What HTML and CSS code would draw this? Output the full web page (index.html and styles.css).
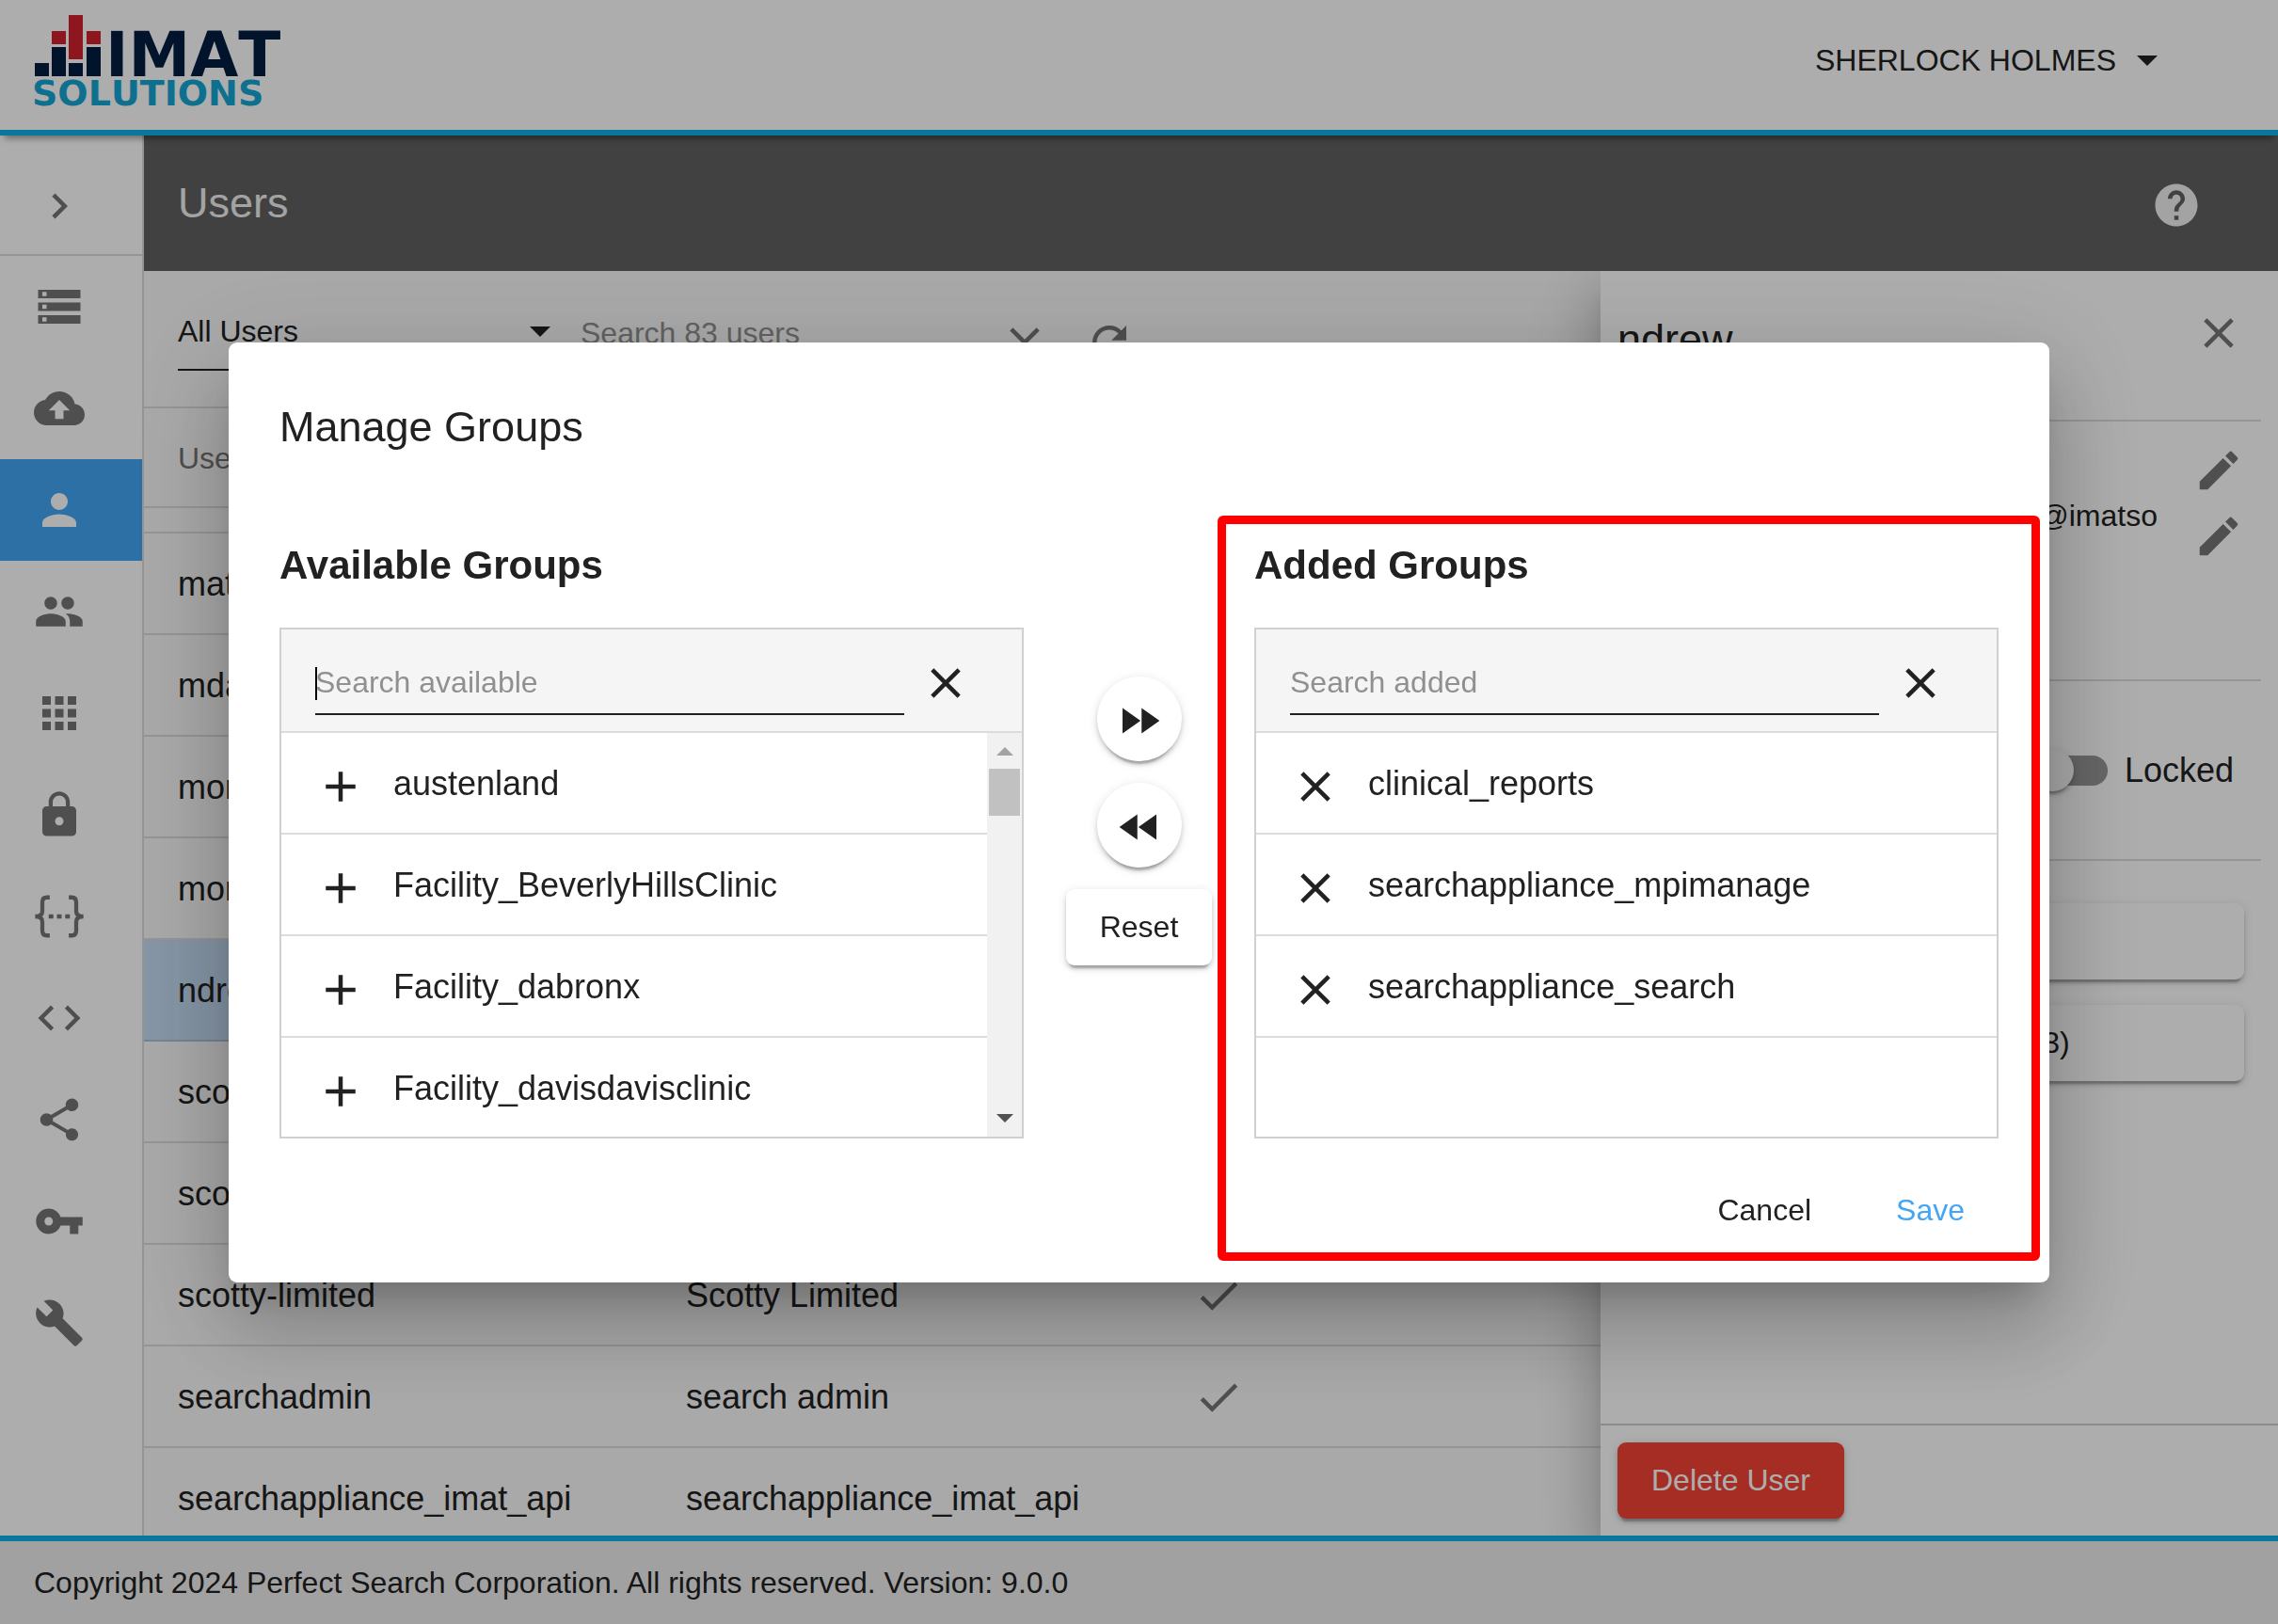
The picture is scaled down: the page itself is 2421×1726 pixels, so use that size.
FILE: index.html
```html
<!DOCTYPE html>
<html lang="en">
<head>
<meta charset="utf-8">
<title>Users</title>
<link rel="stylesheet" href="styles.css">
</head>
<body>
<svg class="sprite" aria-hidden="true">
  <symbol id="close" viewBox="0 0 24 24"><path d="M19 6.41 17.59 5 12 10.59 6.41 5 5 6.41 10.59 12 5 17.59 6.41 19 12 13.41 17.59 19 19 17.59 13.41 12z"/></symbol>
  <symbol id="plus" viewBox="0 0 24 24"><path d="M19 13h-6v6h-2v-6H5v-2h6V5h2v6h6v2z"/></symbol>
  <symbol id="check" viewBox="0 0 24 24"><path d="M9 16.17 4.83 12l-1.42 1.41L9 19 21 7l-1.41-1.41z"/></symbol>
  <symbol id="edit" viewBox="0 0 24 24"><path d="M3 17.25V21h3.75L17.81 9.94l-3.75-3.75L3 17.25zM20.71 7.04a1 1 0 0 0 0-1.41l-2.34-2.34a1 1 0 0 0-1.41 0l-1.83 1.83 3.75 3.75 1.83-1.83z"/></symbol>
</svg>

<header class="header">
  <svg class="logo" viewBox="0 0 280 108" role="img" aria-label="IMAT Solutions">
    <g fill="#041d41">
      <path d="M1 52h15v14H1zM19 35h15v31H19zM37 52h15v14H37zM56 35h15v31H56z"/>
      <text class="logo-name" x="76" y="66">IMAT</text>
    </g>
    <path fill="#d2232f" d="M19 18h15v14H19zM37 1h15v47H37zM56 18h15v14H56z"/>
    <text class="logo-sub" x="-2" y="97" fill="#13a5d2">SOLUTIONS</text>
  </svg>
  <button class="account" type="button">SHERLOCK HOLMES <span class="arrow"></span></button>
</header>

<div class="main">
  <nav class="nav">
    <button class="nav-toggle" type="button" aria-label="Expand menu"><svg class="icon" viewBox="0 0 24 24"><path d="M10 6 8.59 7.41 13.17 12l-4.58 4.59L10 18l6-6z"/></svg></button>
    <a href="#" class="nav-item" aria-label="Storage"><svg class="icon" viewBox="0 0 24 24"><path d="M2 20h20v-4H2v4zm2-3h2v2H4v-2zM2 4v4h20V4H2zm4 3H4V5h2v2zm-4 7h20v-4H2v4zm2-3h2v2H4v-2z"/></svg></a>
    <a href="#" class="nav-item" aria-label="Upload"><svg class="icon" viewBox="0 0 24 24"><path d="M19.35 10.04A7.49 7.49 0 0 0 12 4C9.11 4 6.6 5.64 5.35 8.04A5.994 5.994 0 0 0 0 14c0 3.31 2.69 6 6 6h13c2.76 0 5-2.24 5-5 0-2.64-2.05-4.78-4.65-4.96zM14 13v4h-4v-4H7l5-5 5 5h-3z"/></svg></a>
    <a href="#" class="nav-item active" aria-label="Users"><svg class="icon" viewBox="0 0 24 24"><path d="M12 12c2.21 0 4-1.79 4-4s-1.79-4-4-4-4 1.79-4 4 1.79 4 4 4zm0 2c-2.67 0-8 1.34-8 4v2h16v-2c0-2.66-5.33-4-8-4z"/></svg></a>
    <a href="#" class="nav-item" aria-label="Groups"><svg class="icon" viewBox="0 0 24 24"><path d="M16 11c1.66 0 2.99-1.34 2.99-3S17.66 5 16 5s-3 1.34-3 3 1.34 3 3 3zm-8 0c1.66 0 2.99-1.34 2.99-3S9.66 5 8 5 5 6.34 5 8s1.34 3 3 3zm0 2c-2.33 0-7 1.17-7 3.5V19h14v-2.5c0-2.33-4.67-3.5-7-3.5zm8 0c-.29 0-.62.02-.97.05 1.16.84 1.97 1.97 1.97 3.45V19h6v-2.5c0-2.33-4.67-3.5-7-3.5z"/></svg></a>
    <a href="#" class="nav-item" aria-label="Apps"><svg class="icon" viewBox="0 0 24 24"><path d="M4 8h4V4H4v4zm6 12h4v-4h-4v4zm-6 0h4v-4H4v4zm0-6h4v-4H4v4zm6 0h4v-4h-4v4zm6-10v4h4V4h-4zm-6 4h4V4h-4v4zm6 6h4v-4h-4v4zm0 6h4v-4h-4v4z"/></svg></a>
    <a href="#" class="nav-item" aria-label="Security"><svg class="icon" viewBox="0 0 24 24"><path d="M18 8h-1V6c0-2.76-2.24-5-5-5S7 3.24 7 6v2H6c-1.1 0-2 .9-2 2v10c0 1.1.9 2 2 2h12c1.1 0 2-.9 2-2V10c0-1.100-.9-2-2-2zm-6 9c-1.1 0-2-.9-2-2s.9-2 2-2 2 .9 2 2-.9 2-2 2zm3.100-9H8.900V6a3.100 3.100 0 0 1 6.200 0v2z"/></svg></a>
    <a href="#" class="nav-item" aria-label="Variables"><svg class="icon" viewBox="0 0 24 24"><path fill="none" stroke="currentColor" stroke-width="1.900" d="M7.500 3H6.200Q4 3 4 5.200V9.500Q4 12 .6 12 4 12 4 14.500v4.300Q4 21 6.200 21h1.300M16.500 3h1.300Q20 3 20 5.200v4.300q0 2.500 3.400 2.500-3.400 0-3.400 2.500v4.300Q20 21 17.800 21h-1.300"/><path d="M7 11h2.200v2H7zM10.900 11h2.200v2h-2.200zM14.800 11H17v2h-2.200z"/></svg></a>
    <a href="#" class="nav-item" aria-label="Code"><svg class="icon" viewBox="0 0 24 24"><path d="M9.400 16.600 4.800 12l4.600-4.600L8 6l-6 6 6 6 1.400-1.400zm5.200 0 4.600-4.600-4.600-4.600L16 6l6 6-6 6-1.400-1.400z"/></svg></a>
    <a href="#" class="nav-item" aria-label="Share"><svg class="icon" viewBox="0 0 24 24"><path d="M18 16.080c-.76 0-1.440.3-1.960.77L8.910 12.700c.05-.23.09-.46.09-.7s-.04-.47-.09-.7l7.050-4.110c.54.5 1.250.81 2.040.81 1.660 0 3-1.340 3-3s-1.340-3-3-3-3 1.340-3 3c0 .24.040.47.090.7L8.040 9.810C7.500 9.310 6.790 9 6 9c-1.660 0-3 1.340-3 3s1.340 3 3 3c.79 0 1.500-.31 2.040-.81l7.120 4.160c-.05.21-.08.43-.08.65 0 1.610 1.310 2.920 2.920 2.920s2.920-1.310 2.920-2.920-1.310-2.920-2.920-2.920z"/></svg></a>
    <a href="#" class="nav-item" aria-label="Keys"><svg class="icon" viewBox="0 0 24 24"><path d="M12.650 10A5.990 5.990 0 0 0 7 6c-3.310 0-6 2.690-6 6s2.690 6 6 6a5.990 5.990 0 0 0 5.650-4H17v4h4v-4h2v-4H12.650zM7 14c-1.100 0-2-.9-2-2s.9-2 2-2 2 .9 2 2-.9 2-2 2z"/></svg></a>
    <a href="#" class="nav-item" aria-label="Tools"><svg class="icon" viewBox="0 0 24 24"><path d="m22.700 19-9.100-9.100c.9-2.300.4-5-1.500-6.900-2-2-5-2.400-7.400-1.300L9 6 6 9 1.600 4.700C.4 7.100.9 10.100 2.900 12.100c1.900 1.900 4.600 2.400 6.900 1.500l9.100 9.100c.4.4 1 .4 1.400 0l2.300-2.300c.5-.4.5-1.100.1-1.400z"/></svg></a>
  </nav>

  <div class="content">
    <div class="toolbar">
      <h1>Users</h1>
      <button class="icon-btn help" type="button" aria-label="Help"><svg class="icon" viewBox="0 0 24 24"><path d="M12 2C6.480 2 2 6.480 2 12s4.480 10 10 10 10-4.480 10-10S17.520 2 12 2zm1 17h-2v-2h2v2zm2.070-7.750-.9.920C13.450 12.900 13 13.500 13 15h-2v-.5c0-1.100.45-2.100 1.170-2.830l1.240-1.260c.37-.36.59-.86.59-1.410 0-1.100-.9-2-2-2s-2 .9-2 2H8c0-2.210 1.790-4 4-4s4 1.790 4 4c0 .88-.36 1.680-.93 2.250z"/></svg></button>
    </div>

    <div class="workspace">
      <section class="users">
        <div class="filters">
          <div class="select-wrap">
            <select aria-label="User filter"><option>All Users</option></select>
            <span class="arrow"></span>
          </div>
          <input class="user-search" type="text" placeholder="Search 83 users" aria-label="Search users">
          <button class="filter-btn" type="button" aria-label="Clear search"><svg class="icon"><use href="#close"/></svg></button>
          <button class="filter-btn" type="button" aria-label="Refresh"><svg class="icon" viewBox="0 0 24 24"><path d="M17.650 6.350A7.958 7.958 0 0 0 12 4c-4.420 0-7.990 3.580-7.990 8s3.570 8 7.990 8c3.730 0 6.840-2.550 7.730-6h-2.080A5.990 5.990 0 0 1 12 18c-3.310 0-6-2.690-6-6s2.690-6 6-6c1.660 0 3.140.69 4.220 1.780L13 11h7V4l-2.350 2.350z"/></svg></button>
        </div>
        <table class="user-table">
          <thead><tr><th class="col-user">Username</th><th class="col-name">Full Name</th><th>Active</th></tr></thead>
          <tbody>
            <tr class="scrolled"><td></td><td></td><td></td></tr>
            <tr><td>matt</td><td></td><td></td></tr>
            <tr><td>mdavis</td><td></td><td></td></tr>
            <tr><td>monica</td><td></td><td></td></tr>
            <tr><td>monitor</td><td></td><td></td></tr>
            <tr class="selected"><td>ndrew</td><td></td><td></td></tr>
            <tr><td>scott</td><td></td><td></td></tr>
            <tr><td>scotty</td><td></td><td></td></tr>
            <tr><td>scotty-limited</td><td>Scotty Limited</td><td><svg class="icon"><use href="#check"/></svg></td></tr>
            <tr><td>searchadmin</td><td>search admin</td><td><svg class="icon"><use href="#check"/></svg></td></tr>
            <tr><td>searchappliance_imat_api</td><td>searchappliance_imat_api</td><td></td></tr>
          </tbody>
        </table>
      </section>

      <aside class="panel">
        <div class="panel-head">
          <h2>ndrew</h2>
          <button class="icon-btn" type="button" aria-label="Close panel"><svg class="icon"><use href="#close"/></svg></button>
        </div>
        <div class="panel-section fields">
          <div class="field"><button class="icon-btn" type="button" aria-label="Edit name"><svg class="icon"><use href="#edit"/></svg></button></div>
          <div class="field email"><span>ndrew@imatso</span><button class="icon-btn" type="button" aria-label="Edit email"><svg class="icon"><use href="#edit"/></svg></button></div>
        </div>
        <div class="panel-section locks">
          <label class="switch"><input type="checkbox" role="switch">Locked</label>
        </div>
        <div class="panel-actions">
          <button class="raised" type="button">Password</button>
          <button class="raised" type="button">Manage Groups (3)</button>
        </div>
        <div class="panel-foot"><button class="raised danger" type="button">Delete User</button></div>
      </aside>
    </div>
  </div>
</div>

<footer class="footer">Copyright 2024 Perfect Search Corporation. All rights reserved. Version: 9.0.0</footer>

<div class="backdrop">
  <div class="dialog" role="dialog" aria-modal="true" aria-labelledby="dialog-title">
    <h2 class="dialog-title" id="dialog-title">Manage Groups</h2>
    <div class="transfer">
      <section>
        <h3>Available Groups</h3>
        <div class="box">
          <div class="box-search">
            <div class="search-field"><input type="text" placeholder="Search available" aria-label="Search available groups"><span class="caret"></span></div>
            <button class="icon-btn" type="button" aria-label="Clear"><svg class="icon"><use href="#close"/></svg></button>
          </div>
          <div class="box-body">
            <ul>
              <li><button class="icon-btn" type="button" aria-label="Add austenland"><svg class="icon"><use href="#plus"/></svg></button>austenland</li>
              <li><button class="icon-btn" type="button" aria-label="Add Facility_BeverlyHillsClinic"><svg class="icon"><use href="#plus"/></svg></button>Facility_BeverlyHillsClinic</li>
              <li><button class="icon-btn" type="button" aria-label="Add Facility_dabronx"><svg class="icon"><use href="#plus"/></svg></button>Facility_dabronx</li>
              <li><button class="icon-btn" type="button" aria-label="Add Facility_davisdavisclinic"><svg class="icon"><use href="#plus"/></svg></button>Facility_davisdavisclinic</li>
            </ul>
            <div class="scrollbar"><span class="scroll-up"></span><span class="thumb"></span><span class="scroll-down"></span></div>
          </div>
        </div>
      </section>
      <div class="movers">
        <button class="round" type="button" aria-label="Add all"><svg class="icon" viewBox="0 0 24 24"><path d="m4 18 8.500-6L4 6v12zm9-12v12l8.500-6L13 6z"/></svg></button>
        <button class="round" type="button" aria-label="Remove all"><svg class="icon" viewBox="0 0 24 24"><path d="M11 18V6l-8.500 6 8.500 6zm.5-6 8.500 6V6l-8.500 6z"/></svg></button>
        <button class="raised" type="button">Reset</button>
      </div>
      <section>
        <h3>Added Groups</h3>
        <div class="box">
          <div class="box-search">
            <div class="search-field"><input type="text" placeholder="Search added" aria-label="Search added groups"></div>
            <button class="icon-btn" type="button" aria-label="Clear"><svg class="icon"><use href="#close"/></svg></button>
          </div>
          <div class="box-body">
            <ul>
              <li><button class="icon-btn" type="button" aria-label="Remove clinical_reports"><svg class="icon"><use href="#close"/></svg></button>clinical_reports</li>
              <li><button class="icon-btn" type="button" aria-label="Remove searchappliance_mpimanage"><svg class="icon"><use href="#close"/></svg></button>searchappliance_mpimanage</li>
              <li><button class="icon-btn" type="button" aria-label="Remove searchappliance_search"><svg class="icon"><use href="#close"/></svg></button>searchappliance_search</li>
            </ul>
          </div>
        </div>
      </section>
    </div>
    <div class="dialog-actions">
      <button class="flat" type="button">Cancel</button>
      <button class="flat primary" type="button">Save</button>
    </div>
    <div class="highlight"></div>
  </div>
</div>
</body>
</html>
```

FILE: styles.css
```css
:root {
  --ink: #212121;
  --muted: #757575;
  --line: #dcdcdc;
  --brand: #0fb0e8;
  --raised: 0 7px 2px -4px rgba(0, 0, 0, .2), 0 4px 4px rgba(0, 0, 0, .14), 0 2px 11px rgba(0, 0, 0, .12);
}

* { box-sizing: border-box; }

body {
  margin: 0;
  height: 100vh;
  display: flex;
  flex-direction: column;
  overflow: hidden;
  background: #fafafa;
  color: var(--ink);
  font-family: "Liberation Sans", Arial, sans-serif;
  font-size: 32px;
}

h1, h2, h3, ul { margin: 0; padding: 0; }
h1, h2 { font-size: 45px; font-weight: 400; }

button, input, select {
  margin: 0;
  padding: 0;
  border: 0;
  border-radius: 0;
  background: none;
  color: inherit;
  font: inherit;
  outline: none;
}

input::placeholder { color: #909090; opacity: 1; }

.sprite { position: absolute; width: 0; height: 0; }

.icon {
  display: block;
  flex: none;
  width: 54px;
  height: 54px;
  fill: currentColor;
}

.icon-btn { flex: none; display: flex; align-items: center; }

.arrow {
  border: 11px solid transparent;
  border-top-color: currentColor;
  border-bottom: 0;
}

/* Header and footer */

.header {
  position: relative;
  z-index: 2;
  flex: none;
  display: flex;
  justify-content: space-between;
  align-items: center;
  height: 144px;
  padding: 0 128px 0 36px;
  border-bottom: 6px solid var(--brand);
  background: #fff;
  box-shadow: 0 8px 7px -5px rgba(0, 0, 0, .4);
}

.logo { width: 280px; height: 108px; overflow: visible; }
.logo-name { font: 700 66px "DejaVu Sans", sans-serif; font-kerning: none; }
.logo-sub { font: 700 38px "DejaVu Sans", sans-serif; font-kerning: none; }

.account {
  display: flex;
  align-items: center;
  gap: 22px;
  height: 54px;
  margin-bottom: 10px;
}

.footer {
  flex: none;
  height: 94px;
  padding: 0 36px;
  border-top: 6px solid var(--brand);
  background: #eee;
  line-height: 88px;
}

/* Side navigation */

.main { flex: 1; min-height: 0; display: flex; }

.nav {
  flex: none;
  display: flex;
  flex-direction: column;
  width: 153px;
  border-right: 2px solid var(--line);
  background: #fff;
  color: var(--muted);
}

.nav-toggle {
  height: 128px;
  padding: 24px 36px 0;
  border-bottom: 2px solid var(--line);
}

.nav-item {
  display: flex;
  align-items: center;
  height: 108px;
  padding-left: 36px;
  color: inherit;
}

.nav-item.active { background: #42a5f5; color: #fff; }

/* Content */

.content { flex: 1; min-width: 0; display: flex; flex-direction: column; }

.toolbar {
  flex: none;
  display: flex;
  justify-content: space-between;
  align-items: center;
  height: 144px;
  padding: 0 81px 0 36px;
  background: #616161;
  color: #f0f0f0;
}

.help { padding-top: 4px; }

.workspace { flex: 1; min-height: 0; display: flex; overflow: hidden; }

.users { flex: 1; min-width: 0; overflow: hidden; }

.filters {
  display: flex;
  align-items: flex-start;
  height: 146px;
  padding: 24px 36px 0;
  border-bottom: 2px solid var(--line);
}

.select-wrap {
  display: flex;
  align-items: center;
  width: 396px;
  height: 82px;
  margin-right: 32px;
  border-bottom: 2px solid var(--ink);
}

.select-wrap select { flex: 1; height: 80px; appearance: none; }

.user-search { width: 427px; height: 84px; }

.filter-btn {
  display: flex;
  align-items: center;
  justify-content: center;
  width: 90px;
  height: 104px;
  color: var(--muted);
}

.user-table {
  width: 100%;
  table-layout: fixed;
  border-collapse: separate;
  border-spacing: 0;
  font-size: 36px;
}

.user-table th, .user-table td {
  height: 108px;
  padding: 2px 0 0;
  border-bottom: 2px solid var(--line);
  text-align: left;
}

.user-table th {
  height: 106px;
  color: var(--muted);
  font-size: 32px;
  font-weight: 400;
}

.user-table .scrolled td { height: 27px; }
.user-table .icon { color: var(--muted); }
.user-table .selected td { background: #c5ddf5; border-color: #adc2d8; }
.user-table th:first-child, .user-table td:first-child { padding-left: 36px; }
.col-user { width: 576px; }
.col-name { width: 539px; }

/* User panel */

.panel {
  position: relative;
  flex: none;
  display: flex;
  flex-direction: column;
  width: 720px;
  background: #fff;
  box-shadow: 0 18px 22px -11px rgba(0, 0, 0, .2), 0 36px 54px 4px rgba(0, 0, 0, .14), 0 14px 68px 11px rgba(0, 0, 0, .12);
}

.panel .icon { color: var(--muted); }

.panel-head {
  display: flex;
  justify-content: space-between;
  align-items: flex-start;
  height: 160px;
  margin: 0 18px;
  padding: 39px 18px 0 0;
  border-bottom: 2px solid var(--line);
}

.panel-head h2 { line-height: 68px; }

.panel-section { margin: 0 18px; border-bottom: 2px solid var(--line); }

.fields { height: 276px; padding: 25px 18px 0; }

.field {
  display: flex;
  justify-content: flex-end;
  align-items: center;
  gap: 38px;
  height: 54px;
}

.email { height: 86px; }
.email span { align-self: flex-start; line-height: 42px; }

.locks {
  display: flex;
  justify-content: flex-end;
  align-items: center;
  height: 191px;
  padding-right: 29px;
}

.switch { display: flex; align-items: center; gap: 18px; font-size: 36px; }

.switch input {
  display: flex;
  align-items: center;
  width: 81px;
  height: 32px;
  border-radius: 16px;
  background: #979797;
  appearance: none;
}

.switch input::before {
  content: "";
  width: 45px;
  height: 45px;
  border-radius: 50%;
  background: #fafafa;
  box-shadow: var(--raised);
}

.panel-actions {
  flex: 1;
  display: flex;
  flex-direction: column;
  gap: 27px;
  padding: 45px 36px 0;
}

.panel-foot { padding: 18px; border-top: 2px solid #cfcfcf; }

.raised {
  height: 81px;
  padding: 0 36px;
  border-radius: 9px;
  background: #fff;
  box-shadow: var(--raised);
}

.danger { background: #f44336; color: #fff; }

/* Manage groups dialog */

.backdrop {
  position: fixed;
  inset: 0;
  z-index: 10;
  display: flex;
  align-items: center;
  justify-content: center;
  background: rgba(0, 0, 0, .32);
}

.dialog {
  position: relative;
  width: calc(100% - 144px);
  max-width: 1935px;
  padding: 54px 54px 36px;
  border-radius: 9px;
  background: #fff;
  box-shadow: 0 25px 34px -16px rgba(0, 0, 0, .2), 0 54px 86px 7px rgba(0, 0, 0, .14), 0 20px 104px 18px rgba(0, 0, 0, .12);
}

.dialog-title { margin-bottom: 83px; line-height: 72px; }

.transfer { display: grid; grid-template-columns: 1fr 245px 1fr; }

.transfer h3 { margin-bottom: 38px; font-size: 42px; line-height: 56px; }

.box { border: 2px solid #d0d0d0; }

.box-search {
  display: flex;
  align-items: flex-start;
  gap: 17px;
  height: 110px;
  padding: 25px 54px 0 36px;
  border-bottom: 2px solid var(--line);
  background: #f5f5f5;
}

.box-search .icon-btn { height: 64px; }

.search-field { position: relative; flex: 1; }

.search-field input {
  display: block;
  width: 100%;
  height: 66px;
  border-bottom: 2px solid var(--ink);
}

.caret {
  position: absolute;
  left: 0;
  top: 15px;
  width: 2px;
  height: 35px;
  background: #000;
}

.box-body { display: flex; height: 429px; overflow: hidden; }

.box-body ul { flex: 1; list-style: none; font-size: 36px; }

.box-body li {
  display: flex;
  align-items: center;
  gap: 29px;
  height: 108px;
  padding: 2px 0 0 36px;
  border-bottom: 2px solid var(--line);
}

.box-body .icon-btn { padding-top: 6px; }

.scrollbar {
  display: flex;
  flex-direction: column;
  align-items: center;
  width: 37px;
  padding: 15px 0;
  background: #f1f1f1;
}

.scroll-up, .scroll-down { border: 9px solid transparent; }
.scroll-up { border-top: 0; border-bottom-color: #a3a3a3; }
.scroll-down { margin-top: auto; border-bottom: 0; border-top-color: #505050; }
.thumb { width: 33px; height: 50px; margin-top: 14px; background: #c1c1c1; }

.movers {
  display: flex;
  flex-direction: column;
  align-items: center;
  gap: 23px;
  padding-top: 146px;
}

.round {
  display: flex;
  align-items: center;
  justify-content: center;
  width: 90px;
  height: 90px;
  padding-top: 4px;
  border-radius: 50%;
  background: #fff;
  box-shadow: var(--raised);
}

.dialog-actions {
  display: flex;
  justify-content: flex-end;
  gap: 18px;
  margin-top: 36px;
}

.flat { height: 81px; padding: 0 36px; }
.primary { color: #42a5f5; }

/* Callout drawn over the added-groups column */
.highlight {
  position: absolute;
  inset: 184px 10px 23px 1051px;
  border: 9px solid #f00;
  border-radius: 6px;
  pointer-events: none;
}
```
